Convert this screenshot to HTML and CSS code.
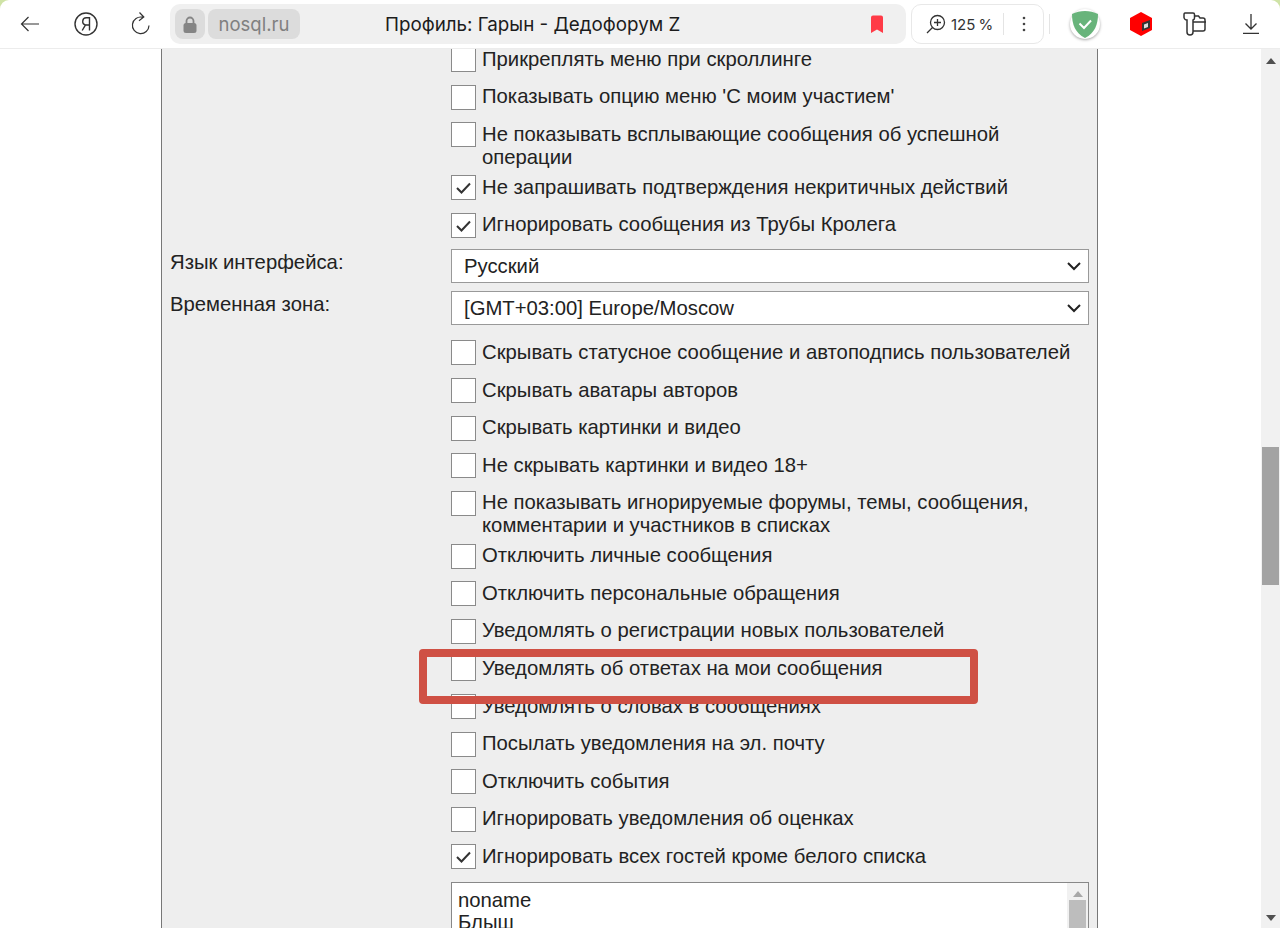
FILE: index.html
```html
<!DOCTYPE html>
<html lang="ru">
<head>
  <meta charset="UTF-8">
  <title>Профиль: Гарын - Дедофорум Z</title>
  <link rel="stylesheet" href="styles.css">
</head>
<body>

  <header class="toolbar">
    <svg class="ico ico-back" width="24" height="24" viewBox="0 0 24 24"><path d="M21 12H3.500M10.500 5l-7 7 7 7" fill="none" stroke="#333" stroke-width="1.200"/></svg>
    <svg class="ico ico-ya" width="26" height="26" viewBox="0 0 26 26"><circle cx="13" cy="13" r="11" fill="none" stroke="#333" stroke-width="1.400"/><path d="M16.500 19.500V6.800h-3a3.600 3.600 0 0 0-1 7.100L9.200 19.500M16.500 14h-3.600" fill="none" stroke="#333" stroke-width="1.400"/></svg>
    <svg class="ico ico-reload" width="24" height="26" viewBox="0 0 24 26"><path d="M13.500 6.200A8.300 8.300 0 1 0 20 14.500M10.500 1.500l4.300 4.500-4.800 3.700" fill="none" stroke="#333" stroke-width="1.200"/></svg>

    <div class="urlbar">
      <span class="chip chip-lock">
        <svg width="14" height="17" viewBox="0 0 14 17"><path d="M3.500 8V5a3.500 3.500 0 0 1 7 0v3" fill="none" stroke="#858585" stroke-width="1.800"/><rect x="0.500" y="7" width="13" height="10" rx="2.500" fill="#858585"/></svg>
      </span>
      <span class="chip chip-host">nosql.ru</span>
      <span class="page-title">Профиль: Гарын - Дедофорум Z</span>
      <svg class="bookmark" width="14" height="19" viewBox="0 0 14 19"><path d="M1 2.500A2 2 0 0 1 3 .500h8a2 2 0 0 1 2 2V18l-6-3.500L1 18z" fill="#ff3b47"/></svg>
    </div>

    <div class="zoombox">
      <svg width="20" height="20" viewBox="0 0 20 20"><circle cx="11.500" cy="8.500" r="7" fill="none" stroke="#333" stroke-width="1.300"/><path d="M11.500 5v7M8 8.500h7M6.500 13.500L1 19" fill="none" stroke="#333" stroke-width="1.300"/></svg>
      <span class="zoom-value">125 %</span>
      <span class="zoom-sep"></span>
      <svg width="4" height="16" viewBox="0 0 4 16"><circle cx="2" cy="2" r="1.300" fill="#444"/><circle cx="2" cy="8" r="1.300" fill="#444"/><circle cx="2" cy="14" r="1.300" fill="#444"/></svg>
    </div>
    <span class="tool-sep"></span>

    <span class="ext-guard">
      <svg width="26" height="27" viewBox="0 0 26 27"><path d="M13 0c4.500 0 9 1 13 3 0 10-3 19-13 24C3 22 0 13 0 3c4-2 8.500-3 13-3z" fill="#68b47b"/><path d="M7.500 12.500l4.500 4.500 7-7.500" fill="none" stroke="#fff" stroke-width="2"/></svg>
    </span>
    <svg class="ext-hex" width="24" height="26" viewBox="0 0 24 26"><path d="M12 1l11 6v12l-11 6-11-6V7z" fill="#f00"/><path d="M13 12l8-3v8l-8 3z" fill="#333"/><path d="M15 13.500l4-1.500v4l-4 1.500z" fill="#ddd"/></svg>
    <svg class="ext-key" width="24" height="26" viewBox="0 0 24 26"><path d="M2 2h8a1.500 1.500 0 0 1 1.500 1.500V7a2 2 0 0 1-1.500 2v12a3 3 0 0 1-6 0V9a3 3 0 0 1-3-2.500V3.500A1.500 1.500 0 0 1 2 2z" fill="none" stroke="#333" stroke-width="1.500"/><path d="M11.500 5h4l1.500 2h3a2 2 0 0 1 2 2v9a2 2 0 0 1-2 2h-10M10 11h13" fill="none" stroke="#333" stroke-width="1.500"/></svg>
    <svg class="ico-down" width="16" height="20" viewBox="0 0 16 20"><path d="M8 0v14.500M2.500 9.500L8 15l5.500-5.500M0 19.300h16" fill="none" stroke="#333" stroke-width="1.300"/></svg>
  </header>

  <div class="viewport">
    <main class="page">
      <section class="panel">
        <div class="form-row">
          <div class="form-label"></div>
          <div class="form-field">
            <label class="opt"><span class="box"></span><span class="opt-text">Прикреплять меню при скроллинге</span></label>
            <label class="opt"><span class="box"></span><span class="opt-text">Показывать опцию меню 'С моим участием'</span></label>
            <label class="opt"><span class="box"></span><span class="opt-text">Не показывать всплывающие сообщения об успешной операции</span></label>
            <label class="opt"><span class="box"><svg width="23" height="23" viewBox="0 0 23 23"><path d="M5 12l4.500 4.500 8.500-9" fill="none" stroke="#333" stroke-width="2"/></svg></span><span class="opt-text">Не запрашивать подтверждения некритичных действий</span></label>
            <label class="opt"><span class="box"><svg width="23" height="23" viewBox="0 0 23 23"><path d="M5 12l4.500 4.500 8.500-9" fill="none" stroke="#333" stroke-width="2"/></svg></span><span class="opt-text">Игнорировать сообщения из Трубы Кролега</span></label>
          </div>
        </div>

        <div class="form-row select-row">
          <div class="form-label">Язык интерфейса:</div>
          <div class="form-field">
            <div class="select">Русский<svg width="16" height="10" viewBox="0 0 16 10"><path d="M2 2l6 6 6-6" fill="none" stroke="#222" stroke-width="2"/></svg></div>
          </div>
        </div>
        <div class="form-row select-row">
          <div class="form-label">Временная зона:</div>
          <div class="form-field">
            <div class="select">[GMT+03:00] Europe/Moscow<svg width="16" height="10" viewBox="0 0 16 10"><path d="M2 2l6 6 6-6" fill="none" stroke="#222" stroke-width="2"/></svg></div>
          </div>
        </div>

        <div class="form-row opts-second">
          <div class="form-label"></div>
          <div class="form-field">
            <label class="opt"><span class="box"></span><span class="opt-text">Скрывать статусное сообщение и автоподпись пользователей</span></label>
            <label class="opt"><span class="box"></span><span class="opt-text">Скрывать аватары авторов</span></label>
            <label class="opt"><span class="box"></span><span class="opt-text">Скрывать картинки и видео</span></label>
            <label class="opt"><span class="box"></span><span class="opt-text">Не скрывать картинки и видео 18+</span></label>
            <label class="opt"><span class="box"></span><span class="opt-text">Не показывать игнорируемые форумы, темы, сообщения, комментарии и участников в списках</span></label>
            <label class="opt"><span class="box"></span><span class="opt-text">Отключить личные сообщения</span></label>
            <label class="opt"><span class="box"></span><span class="opt-text">Отключить персональные обращения</span></label>
            <label class="opt"><span class="box"></span><span class="opt-text">Уведомлять о регистрации новых пользователей</span></label>
            <label class="opt"><span class="box"></span><span class="opt-text">Уведомлять об ответах на мои сообщения</span></label>
            <label class="opt"><span class="box"></span><span class="opt-text">Уведомлять о словах в сообщениях</span></label>
            <label class="opt"><span class="box"></span><span class="opt-text">Посылать уведомления на эл. почту</span></label>
            <label class="opt"><span class="box"></span><span class="opt-text">Отключить события</span></label>
            <label class="opt"><span class="box"></span><span class="opt-text">Игнорировать уведомления об оценках</span></label>
            <label class="opt"><span class="box"><svg width="23" height="23" viewBox="0 0 23 23"><path d="M5 12l4.500 4.500 8.500-9" fill="none" stroke="#333" stroke-width="2"/></svg></span><span class="opt-text">Игнорировать всех гостей кроме белого списка</span></label>
            <div class="listbox">
              <div class="listbox-text">noname<br>Блыш</div>
              <div class="listbox-bar">
                <svg width="10" height="6" viewBox="0 0 10 6"><path d="M0 6l5-6 5 6z" fill="#a8a8a8"/></svg>
                <span class="listbox-thumb"></span>
              </div>
            </div>
          </div>
        </div>
      </section>
    </main>

    <aside class="scrollbar">
      <svg width="10" height="6" viewBox="0 0 10 6"><path d="M0 6l5-6 5 6z" fill="#505050"/></svg>
      <span class="scrollbar-thumb"></span>
      <svg class="scrollbar-down" width="10" height="6" viewBox="0 0 10 6"><path d="M0 0l5 6 5-6z" fill="#505050"/></svg>
    </aside>

    <div class="highlight"></div>
  </div>

</body>
</html>
```

FILE: styles.css
```css
html, body {
  height: 100%;
}

body {
  margin: 0;
  overflow: hidden;
  background-color: #cfe3a6;
  font-family: 'Liberation Sans', Arial, sans-serif;
  color: #222;
  display: flex;
  flex-direction: column;
}

.toolbar {
  height: 48px;
  flex: none;
  display: flex;
  align-items: center;
  background-color: #fff;
  border-bottom: 1px solid #ececec;
  border-radius: 9px 9px 0 0;
  font-family: 'Inter', 'Noto Sans', sans-serif;
}

.ico-back {
  margin-left: 18px;
}

.ico-ya {
  margin-left: 31px;
}

.ico-reload {
  margin-left: 30px;
}

.urlbar {
  margin-left: 17px;
  width: 736px;
  height: 40px;
  box-sizing: border-box;
  padding: 0 5px;
  background-color: #f0f0f0;
  border-radius: 10px;
  display: flex;
  align-items: center;
  gap: 3px;
}

.chip {
  height: 30px;
  background-color: #dcdcdc;
  border-radius: 8px;
  display: flex;
  align-items: center;
  justify-content: center;
}

.chip-lock {
  width: 30px;
}

.chip-host {
  width: 92px;
  font-size: 18.500px;
  color: #808080;
}

.page-title {
  margin-left: 82px;
  font-size: 18.800px;
  color: #1c1c1c;
  white-space: nowrap;
}

.bookmark {
  margin-left: auto;
  margin-right: 17px;
}

.zoombox {
  margin-left: 5px;
  width: 133px;
  height: 40px;
  box-sizing: border-box;
  padding-left: 14px;
  border: 1px solid #e8e8e8;
  border-radius: 10px;
  display: flex;
  align-items: center;
}

.zoom-value {
  margin-left: 5px;
  width: 52px;
  font-size: 15px;
  word-spacing: -1px;
  color: #333;
}

.zoom-sep {
  width: 1px;
  height: 22px;
  background-color: #e4e4e4;
  margin-right: 18px;
}

.tool-sep {
  margin-left: 5px;
  width: 1px;
  height: 20px;
  background-color: #e4e4e4;
}

.ext-guard {
  margin-left: 20px;
  width: 30px;
  height: 30px;
  flex: none;
  border-radius: 50%;
  background-color: #fff;
  box-shadow: 0 1px 3px rgba(0,0,0,0.35);
  display: flex;
  align-items: center;
  justify-content: center;
}

.ext-hex {
  margin-left: 29px;
}

.ext-key {
  margin-left: 30px;
}

.ico-down {
  margin-left: 36px;
}

.viewport {
  flex: 1;
  min-height: 0;
  position: relative;
  display: flex;
  background-color: #fff;
  overflow: hidden;
}

.page {
  flex: 1;
  min-width: 0;
}

.panel {
  margin-left: 161px;
  width: 937px;
  height: 1000px;
  box-sizing: border-box;
  border-left: 1px solid #777;
  border-right: 1px solid #777;
  background-color: #eee;
}

.form-row {
  display: grid;
  grid-template-columns: 289px 638px;
  margin-right: 8px;
}

.form-row:first-child {
  margin-top: -8px;
}

.form-label {
  padding: 2px 0 0 8px;
  font-size: 20.300px;
  line-height: 23px;
}

.select-row {
  margin-top: 5px;
}

.select-row + .select-row {
  margin-top: 8px;
}

.opts-second {
  margin-top: 9px;
}

.opt {
  display: flex;
  align-items: flex-start;
  gap: 6px;
}

.box {
  flex: none;
  width: 23px;
  height: 23px;
  margin: 6.300px 0;
  background-color: #fff;
  border: 1px solid #8a8a8a;
}

.box svg {
  display: block;
}

.opt-text {
  padding-top: 6.800px;
  font-size: 20.300px;
  line-height: 23px;
}

.select {
  height: 34px;
  box-sizing: border-box;
  padding: 0 6px 0 12px;
  background-color: #fff;
  border: 1px solid #999;
  font-size: 20.300px;
  display: flex;
  align-items: center;
  justify-content: space-between;
}

.listbox {
  margin-top: 6px;
  height: 120px;
  box-sizing: border-box;
  border: 1px solid #888;
  background-color: #fff;
  display: flex;
  justify-content: space-between;
}

.listbox-text {
  padding: 6px 6px;
  font-size: 20.300px;
  line-height: 22px;
}

.listbox-bar {
  width: 21px;
  background-color: #f1f1f1;
  display: flex;
  flex-direction: column;
  align-items: center;
  padding-top: 8px;
}

.listbox-thumb {
  margin-top: 3px;
  width: 17px;
  height: 80px;
  background-color: #bdbdbd;
}

.scrollbar {
  width: 19px;
  flex: none;
  background-color: #f1f1f1;
  display: flex;
  flex-direction: column;
  align-items: center;
  padding-top: 9px;
}

.scrollbar-thumb {
  margin-top: 383px;
  width: 17px;
  height: 138px;
  background-color: #a3a3a3;
}

.scrollbar-down {
  margin-top: auto;
  margin-bottom: 7px;
}

.highlight {
  position: absolute;
  left: 419px;
  top: 600px;
  width: 559px;
  height: 55px;
  box-sizing: border-box;
  border: 8px solid #cf5044;
  border-radius: 4px;
}
```
